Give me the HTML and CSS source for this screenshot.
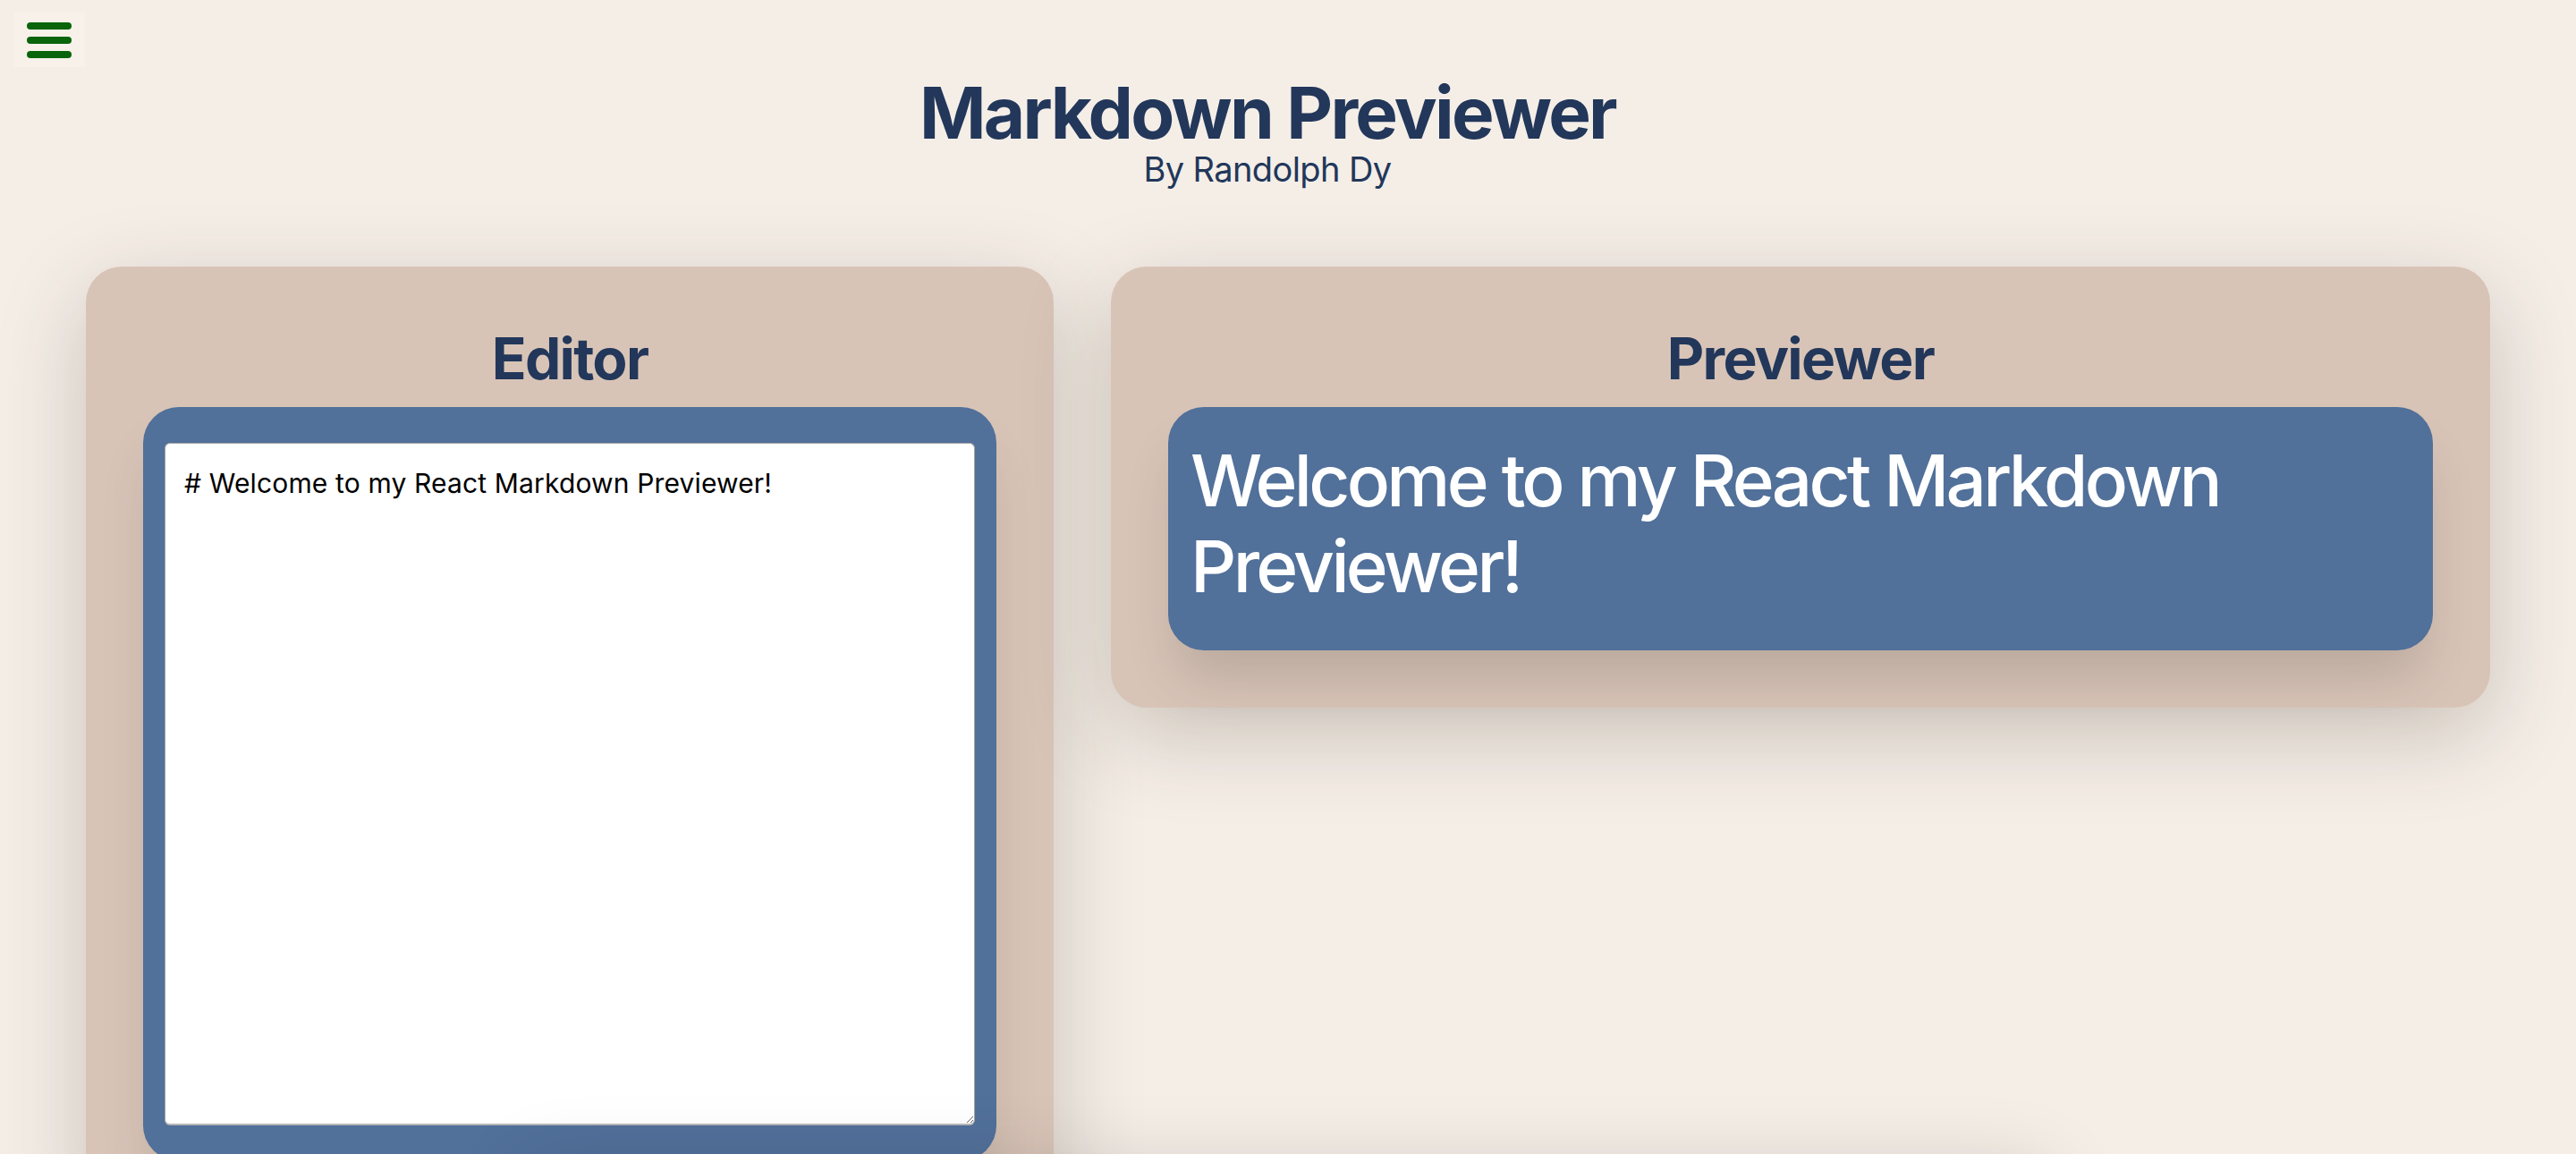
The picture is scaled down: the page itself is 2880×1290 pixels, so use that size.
FILE: index.html
```html
<!DOCTYPE html>
<html lang="en">
<head>
<meta charset="utf-8">
<title>Markdown Previewer</title>
<link rel="stylesheet" href="styles.css">
</head>
<body>
  <button class="menu-btn" aria-label="Menu">
    <span class="bar"></span>
    <span class="bar"></span>
    <span class="bar"></span>
  </button>
  <header class="header">
    <h1 class="title">Markdown Previewer</h1>
    <p class="subtitle">By Randolph Dy</p>
  </header>
  <main class="workspace">
    <section class="panel editor-panel">
      <h2 class="panel-title">Editor</h2>
      <div class="editor-box">
        <textarea class="editor" id="editor"># Welcome to my React Markdown Previewer!</textarea>
      </div>
    </section>
    <section class="panel preview-panel">
      <h2 class="panel-title">Previewer</h2>
      <div class="preview" id="preview">
        <h1 class="preview-h1">Welcome to my React Markdown Previewer!</h1>
      </div>
    </section>
  </main>
  <div class="bottom-sheet"></div>
</body>
</html>
```

FILE: styles.css
```css
* { box-sizing: border-box; }

html, body {
  margin: 0;
  padding: 0;
}

body {
  background: #f5eee7;
  font-family: Inter, "Noto Sans", sans-serif;
  color: #22375a;
  min-height: 1290px;
  overflow: hidden;
}

.menu-btn {
  position: absolute;
  top: 13px;
  left: 15px;
  width: 80px;
  height: 62px;
  background: #f7f1ea;
  border: none;
  padding: 12px 0 0 15px;
  display: flex;
  flex-direction: column;
  gap: 8px;
  cursor: pointer;
}

.bar {
  display: block;
  width: 50px;
  height: 8px;
  border-radius: 4px;
  background: #0a640b;
}

.header {
  padding: 86px 46px 0 0;
  text-align: center;
}

.title {
  margin: 0;
  font-size: 80px;
  line-height: 80px;
  font-weight: 700;
  letter-spacing: -2.7px;
}

.subtitle {
  margin: 4px 0 0;
  font-size: 38px;
  line-height: 38px;
  font-weight: 400;
  letter-spacing: -0.6px;
}

.workspace {
  display: grid;
  grid-template-columns: 1082px 1fr;
  gap: 64px;
  padding: 0 96px;
  margin-top: 90px;
  align-items: start;
}

.panel {
  background: #d8c4b7;
  border-radius: 40px;
  padding: 71px 64px 64px;
  box-shadow: 0 30px 100px rgba(50, 35, 25, 0.22);
  position: relative;
}

.panel-title {
  margin: 0 0 22px;
  text-align: center;
  font-size: 64px;
  line-height: 64px;
  font-weight: 700;
  letter-spacing: -1.7px;
}

.editor-box {
  background: #51709a;
  border-radius: 40px;
  padding: 40px 24px;
  box-shadow: 0 40px 60px -10px rgba(0, 0, 0, 0.12);
}

.editor {
  display: block;
  width: 100%;
  height: 763px;
  border: 1px solid #a3a3a3;
  border-bottom: 2px solid #b8b8b8;
  border-radius: 6px;
  padding: 26px 21px;
  font-family: Inter, "Noto Sans", sans-serif;
  font-size: 30px;
  line-height: 36px;
  letter-spacing: 0.15px;
  color: #000;
  background: #fff;
  resize: both;
  outline: none;
}

.preview {
  background: #51709a;
  border-radius: 40px;
  padding: 34px 25px 46px;
  color: #fff;
  box-shadow: 0 40px 60px -10px rgba(0, 0, 0, 0.14);
}

.preview-h1 {
  margin: 0;
  font-size: 80px;
  line-height: 96px;
  font-weight: 500;
  letter-spacing: -3.7px;
}

.bottom-sheet {
  position: fixed;
  left: 50%;
  bottom: -260px;
  width: 1700px;
  height: 240px;
  margin-left: -850px;
  background: #f5eee7;
  box-shadow: 0 0 90px rgba(0, 0, 0, 0.16);
  z-index: 5;
}
```
